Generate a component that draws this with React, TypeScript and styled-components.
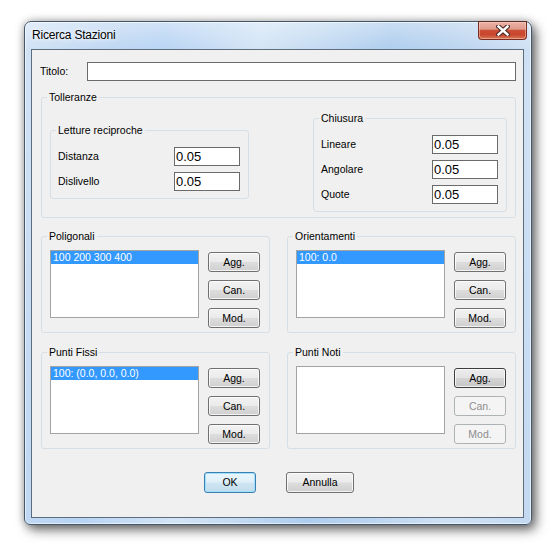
import React from "react";
import styled, { createGlobalStyle, css } from "styled-components";

const GlobalStyle = createGlobalStyle`
  html, body { margin: 0; padding: 0; background: #ffffff; }
  body { font-family: "Liberation Sans", Arial, sans-serif; color: #000; }
  * { box-sizing: border-box; }
`;

const Page = styled.div`
  width: 560px;
  height: 553px;
  padding: 21px 0 0 24px;
`;

const Window = styled.div`
  width: 508px;
  height: 504px;
  display: flex;
  flex-direction: column;
  border: 1px solid #45576b;
  border-radius: 7px 7px 6px 6px;
  background:
    linear-gradient(to bottom, rgba(255, 255, 255, 0.35), rgba(255, 255, 255, 0) 28px),
    linear-gradient(100deg, #d2e3f5 0%, #c0d8f3 14%, #b8d4f4 24%, #d3e4f5 40%, #c4dbf2 50%, #aecdee 62%, #b9d3ef 72%, #cfe1f4 86%, #c3d9f1 100%);
  box-shadow:
    inset 0 0 0 1px rgba(255, 255, 255, 0.55),
    4px 5px 12px rgba(0, 0, 0, 0.55),
    0 0 8px rgba(0, 0, 0, 0.28);
`;

const TitleBar = styled.div`
  height: 27px;
  display: flex;
  justify-content: space-between;
  align-items: flex-start;
  padding: 0 4px 0 7px;
`;

const TitleText = styled.span`
  font-size: 12px;
  line-height: 27px;
  letter-spacing: -0.2px;
  color: #000;
  text-shadow: 0 0 6px rgba(255, 255, 255, 0.95), 0 0 3px rgba(255, 255, 255, 0.9);
`;

const CloseButton = styled.div`
  width: 49px;
  height: 19px;
  margin-top: -1px;
  border: 1px solid #7b2c20;
  border-top-color: #5c2a22;
  border-radius: 0 0 4px 4px;
  background: linear-gradient(
    to bottom,
    #eab3a6 0%,
    #e1998a 42%,
    #cc4d35 50%,
    #c8462d 75%,
    #d7785a 100%
  );
  box-shadow: inset 0 0 0 1px rgba(255, 220, 205, 0.45);
  display: flex;
  align-items: center;
  justify-content: center;
`;

const Client = styled.div`
  flex: 1;
  margin: 0 7px 6px 6px;
  border: 1px solid #5d6d7d;
  background: #f0f0f0;
  padding: 12px 7px 0 8px;
  display: flex;
  flex-direction: column;
`;

const Label = styled.span<{ $width?: number }>`
  font-size: 10.5px;
  line-height: 13px;
  white-space: nowrap;
  ${(p) => p.$width && css`width: ${p.$width}px;`}
`;

const TitleRow = styled.div`
  display: flex;
  align-items: center;
  height: 19px;
`;

const TextBox = styled.input<{ $width: number }>`
  width: ${(p) => p.$width}px;
  height: 19px;
  border: 1px solid #6a6a6a;
  background: #fff;
  padding: 0 1px;
  margin: 0;
  font-family: "Liberation Sans", Arial, sans-serif;
  font-size: 13px;
  color: #000;
  outline: none;
`;

const Group = styled.div<{ $height: number; $width?: number; $top?: number }>`
  position: relative;
  height: ${(p) => p.$height}px;
  ${(p) => p.$width && css`width: ${p.$width}px;`}
  ${(p) => p.$top !== undefined && css`margin-top: ${p.$top}px;`}
  border: 1px solid #d5dfe5;
  border-radius: 3px;
`;

const Legend = styled.span`
  position: absolute;
  top: -7px;
  left: 5px;
  padding: 0 2px;
  background: #f0f0f0;
  font-size: 10.5px;
  line-height: 13px;
  white-space: nowrap;
`;

const Tolleranze = styled(Group)`
  margin: 16px 0 0 1px;
  display: flex;
  justify-content: space-between;
  align-items: flex-start;
  padding: 0 8px;
`;

const FieldGrid = styled.div<{ $label: number }>`
  display: grid;
  grid-template-columns: ${(p) => p.$label}px 66px;
  row-gap: 6px;
  align-items: center;
  padding: 16px 8px 7px 7px;
`;

const GroupRow = styled.div<{ $top: number }>`
  display: grid;
  grid-template-columns: 229px 229px;
  column-gap: 17px;
  margin: ${(p) => p.$top}px 0 0 1px;
`;

const ListGroup = styled(Group)`
  display: flex;
  align-items: flex-start;
  gap: 9px;
  padding: 13px 9px 0 8px;
`;

const ListBox = styled.div`
  flex: 1;
  height: 68px;
  border: 1px solid #a3a3a3;
  background: #fff;
`;

const ListItem = styled.div<{ $selected?: boolean }>`
  height: 13px;
  padding-left: 2px;
  font-size: 10.5px;
  line-height: 13px;
  white-space: nowrap;
  ${(p) =>
    p.$selected &&
    css`
      background: #3399ff;
      color: #fff;
    `}
`;

const ButtonColumn = styled.div`
  display: flex;
  flex-direction: column;
  gap: 8px;
  margin-top: 2px;
`;

type Variant = "normal" | "default" | "focused";

const Button = styled.button<{ $width: number; $height?: number; $variant?: Variant }>`
  width: ${(p) => p.$width}px;
  height: ${(p) => p.$height ?? 20}px;
  margin: 0;
  padding: 0;
  border: 1px solid #707070;
  border-radius: 3px;
  font-family: "Liberation Sans", Arial, sans-serif;
  font-size: 10.5px;
  line-height: 13px;
  color: #000;
  background: linear-gradient(to bottom, #f2f2f2 0%, #ebebeb 48%, #dddddd 52%, #cfcfcf 100%);
  box-shadow: inset 0 0 0 1px rgba(255, 255, 255, 0.75);
  ${(p) =>
    p.$variant === "default" &&
    css`
      border-color: #3c7fb1;
      background: linear-gradient(to bottom, #eaf6fd 0%, #e0eff8 48%, #cfe6f3 52%, #c2dcec 100%);
      box-shadow: inset 0 0 0 1px #9fe1fd;
    `}
  ${(p) =>
    p.$variant === "focused" &&
    css`
      border-color: #3d3d3d;
      background: linear-gradient(to bottom, #ececec 0%, #e4e4e4 48%, #d4d4d4 52%, #c6c6c6 100%);
    `}
  &:disabled {
    border-color: #adb2b5;
    background: #f4f4f4;
    color: #8d8d8d;
    box-shadow: none;
  }
`;

const ButtonBar = styled.div`
  display: flex;
  justify-content: center;
  gap: 30px;
  margin-top: 23px;
  padding-left: 2px;
`;

function CloseGlyph() {
  return (
    <svg width="14" height="11" viewBox="0 0 14 11">
      <path d="M2.5 1.5 L11.5 9.5 M11.5 1.5 L2.5 9.5" stroke="#4a2a26" strokeWidth="4.6" strokeLinecap="square" />
      <path d="M2.5 1.5 L11.5 9.5 M11.5 1.5 L2.5 9.5" stroke="#ffffff" strokeWidth="2.4" strokeLinecap="square" />
    </svg>
  );
}

function ListPanel({
  title,
  items,
  disabledEdit,
  focusedAdd,
}: {
  title: string;
  items: string[];
  disabledEdit?: boolean;
  focusedAdd?: boolean;
}) {
  return (
    <ListGroup $height={97}>
      <Legend>{title}</Legend>
      <ListBox>
        {items.map((it, i) => (
          <ListItem key={it} $selected={i === 0}>
            {it}
          </ListItem>
        ))}
      </ListBox>
      <ButtonColumn>
        <Button $width={52} $variant={focusedAdd ? "focused" : "normal"}>Agg.</Button>
        <Button $width={52} disabled={disabledEdit}>Can.</Button>
        <Button $width={52} disabled={disabledEdit}>Mod.</Button>
      </ButtonColumn>
    </ListGroup>
  );
}

export default function App() {
  return (
    <>
      <GlobalStyle />
      <Page>
        <Window>
          <TitleBar>
            <TitleText>Ricerca Stazioni</TitleText>
            <CloseButton>
              <CloseGlyph />
            </CloseButton>
          </TitleBar>
          <Client>
            <TitleRow>
              <Label $width={47}>Titolo:</Label>
              <TextBox $width={429} defaultValue="" />
            </TitleRow>

            <Tolleranze $height={121}>
              <Legend>Tolleranze</Legend>
              <Group $height={69} $width={199} $top={32}>
                <Legend>Letture reciproche</Legend>
                <FieldGrid $label={116}>
                  <Label>Distanza</Label>
                  <TextBox $width={66} defaultValue="0.05" />
                  <Label>Dislivello</Label>
                  <TextBox $width={66} defaultValue="0.05" />
                </FieldGrid>
              </Group>
              <Group $height={94} $width={194} $top={20}>
                <Legend>Chiusura</Legend>
                <FieldGrid $label={111}>
                  <Label>Lineare</Label>
                  <TextBox $width={66} defaultValue="0.05" />
                  <Label>Angolare</Label>
                  <TextBox $width={66} defaultValue="0.05" />
                  <Label>Quote</Label>
                  <TextBox $width={66} defaultValue="0.05" />
                </FieldGrid>
              </Group>
            </Tolleranze>

            <GroupRow $top={18}>
              <ListPanel title="Poligonali" items={["100 200 300 400"]} />
              <ListPanel title="Orientamenti" items={["100: 0.0"]} />
            </GroupRow>

            <GroupRow $top={19}>
              <ListPanel title="Punti Fissi" items={["100: (0.0, 0.0, 0.0)"]} />
              <ListPanel title="Punti Noti" items={[]} disabledEdit focusedAdd />
            </GroupRow>

            <ButtonBar>
              <Button $width={52} $height={21} $variant="default">OK</Button>
              <Button $width={68} $height={21}>Annulla</Button>
            </ButtonBar>
          </Client>
        </Window>
      </Page>
    </>
  );
}
